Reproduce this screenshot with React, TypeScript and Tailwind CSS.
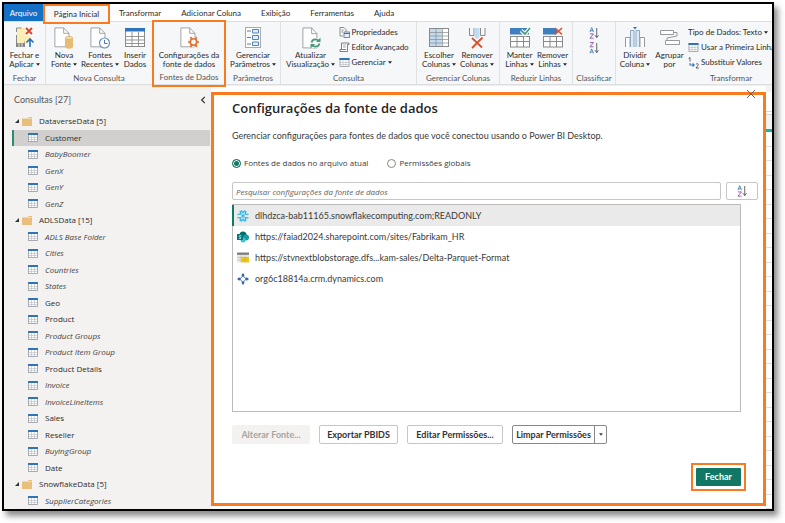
import React from "react";

type Query = { name: string; kind: "folder" | "table"; loaded?: boolean; selected?: boolean };

const queries: Query[] = [
  { name: "DataverseData [5]", kind: "folder" },
  { name: "Customer", kind: "table", loaded: true, selected: true },
  { name: "BabyBoomer", kind: "table" },
  { name: "GenX", kind: "table" },
  { name: "GenY", kind: "table" },
  { name: "GenZ", kind: "table" },
  { name: "ADLSData [15]", kind: "folder" },
  { name: "ADLS Base Folder", kind: "table" },
  { name: "Cities", kind: "table" },
  { name: "Countries", kind: "table" },
  { name: "States", kind: "table" },
  { name: "Geo", kind: "table", loaded: true },
  { name: "Product", kind: "table", loaded: true },
  { name: "Product Groups", kind: "table" },
  { name: "Product Item Group", kind: "table" },
  { name: "Product Details", kind: "table", loaded: true },
  { name: "Invoice", kind: "table" },
  { name: "InvoiceLineItems", kind: "table" },
  { name: "Sales", kind: "table", loaded: true },
  { name: "Reseller", kind: "table", loaded: true },
  { name: "BuyingGroup", kind: "table" },
  { name: "Date", kind: "table", loaded: true },
  { name: "SnowflakeData [5]", kind: "folder" },
  { name: "SupplierCategories", kind: "table" },
];

/* ---------- icons ---------- */

const TableIcon = ({ className = "h-[9px] w-[10px]" }: { className?: string }) => (
  <svg viewBox="0 0 20 18" className={`${className} shrink-0`} aria-hidden="true">
    <rect x="1" y="1" width="18" height="16" fill="#fff" stroke="#8a8f96" strokeWidth="1.5" />
    <path d="M1 9h18M1 13h18M7 4v13M13 4v13" stroke="#b4b9c0" strokeWidth="1.2" />
    <rect x="0" y="0" width="20" height="4" fill="#2f73b8" />
  </svg>
);

const FolderIcon = () => (
  <svg viewBox="0 0 20 18" className="h-[9px] w-[10px] shrink-0" aria-hidden="true">
    <path d="M0 3h11l2-3h7v18H0z" fill="#e9bf7c" />
    <path d="M12 3h7" stroke="#fbe9cb" strokeWidth="1.5" />
  </svg>
);

const Caret = () => (
  <svg viewBox="0 0 6 4" className="ml-[2px] inline-block h-[3px] w-[4px] align-middle" aria-hidden="true">
    <path d="M0 0h6L3 4z" fill="#222" />
  </svg>
);

const Page = () => (
  <>
    <path d="M1 1h10l6 6v15H1z" fill="#fff" stroke="#999" strokeWidth="1" />
    <path d="M11 1v6h6" fill="none" stroke="#999" strokeWidth="1" />
  </>
);

const big = "h-[22px] w-[24px] overflow-visible";

const CloseApplyIcon = () => (
  <svg viewBox="0 0 24 22" className={big} aria-hidden="true">
    <path d="M4 1h8v19H4z" fill="#fbeeb4" />
    <path d="M3.500 5V1h5M3.500 8v8M12 14v3" stroke="#8a8a8a" fill="none" />
    <path d="M12 9h6v4h-4v4h-2z" fill="#fbeeb4" />
    <path d="M3 16h9v4H3z" fill="#888" />
    <path d="M6 16v4M9 16v4" stroke="#ddd" />
    <path d="M13 1l6 6M19 1l-6 6" stroke="#d8432b" strokeWidth="1.8" />
    <path d="M17 20v-8M13.500 15.500L17 12l3.500 3.500" stroke="#2a6fb8" strokeWidth="1.6" fill="none" />
  </svg>
);
const NewSourceIcon = () => (
  <svg viewBox="0 0 24 22" className={big} aria-hidden="true">
    <g transform="translate(2 0) scale(.88 .9)"><Page /></g>
    <path d="M13 11v8.500c0 3 8 3 8 0V11z" fill="#e6bd72" />
    <ellipse cx="17" cy="11" rx="4" ry="1.600" fill="#f3d9a4" stroke="#d9a850" strokeWidth=".6" />
  </svg>
);
const RecentIcon = () => (
  <svg viewBox="0 0 24 22" className={big} aria-hidden="true">
    <g transform="translate(2 0) scale(.88 .9)"><Page /></g>
    <circle cx="16.500" cy="16" r="5" fill="#fff" stroke="#6c93bb" strokeWidth="1.200" />
    <path d="M16.500 13v3.500h3" stroke="#4779ac" fill="none" />
  </svg>
);
const InsertDataIcon = () => (
  <svg viewBox="0 0 24 22" className={big} aria-hidden="true">
    <rect x="2.500" y="1.500" width="19" height="18" fill="#fff" stroke="#8a8a8a" />
    <path d="M2 9.500h20M2 13h20M2 16.500h20M9 5v15M15.500 5v15" stroke="#8a8a8a" strokeWidth=".9" />
    <rect x="2" y="1" width="20" height="3.500" fill="#2f73b8" />
  </svg>
);
const SourceSettingsIcon = () => (
  <svg viewBox="0 0 24 22" className={big} aria-hidden="true">
    <g transform="translate(3 0) scale(.88 .9)"><Page /></g>
    <circle cx="16.500" cy="15" r="5" fill="#f5f7f9" />
    <circle cx="16.500" cy="15" r="3.200" fill="none" stroke="#e0702c" strokeWidth="1.600" />
    <path d="M11 15h2.500M19.500 15H22M13.500 10l1.200 2M18.500 18l1.200 2M19.700 10l-1.200 2M14.700 18l-1.200 2" stroke="#e0702c" strokeWidth="1.700" />
  </svg>
);
const ParametersIcon = () => (
  <svg viewBox="0 0 24 22" className={big} aria-hidden="true">
    <rect x="4.500" y=".5" width="15" height="20" fill="#fff" stroke="#aaa" />
    <path d="M6 4h4M6 10.500h4M6 17h4" stroke="#777" />
    <path d="M11.500 2.500h6v3.500h-6zM11.500 8.500h6v4h-6zM11.500 15h6v3.500h-6z" fill="#e5f0fa" stroke="#4e86bd" />
  </svg>
);
const RefreshIcon = () => (
  <svg viewBox="0 0 24 22" className={big} aria-hidden="true">
    <g transform="translate(3 0) scale(.88 .95)"><Page /></g>
    <rect x="11" y="11" width="11" height="10" fill="#f5f7f9" />
    <path d="M12.500 15.500c1-4 6-4 7.500-1M20.500 16.500c-1 4-6 4-7.500 1" stroke="#4a9a78" strokeWidth="1.700" fill="none" />
    <path d="M21.500 10.500v4.500h-4.500zM11.500 21.500V17H16z" fill="#4a9a78" />
  </svg>
);
const ChooseColumnsIcon = () => (
  <svg viewBox="0 0 24 22" className={big} aria-hidden="true">
    <rect x="2.500" y="1.500" width="19" height="18" fill="#fff" stroke="#8a8a8a" />
    <rect x="3" y="2" width="12" height="17" fill="#c3dbf1" />
    <path d="M2 5.500h20M2 9h20M2 12.500h20M2 16h20M9 2v18M15.500 2v18" stroke="#8a8a8a" strokeWidth=".7" />
  </svg>
);
const RemoveColumnsIcon = () => (
  <svg viewBox="0 0 24 22" className={big} aria-hidden="true">
    <path d="M4.500 1v7.500h4.500V1M15.500 1v7.500H20V1" fill="none" stroke="#8a8a8a" />
    <path d="M9.500 1h5v9l-2.500 2-2.500-2z" fill="#c3dbf1" />
    <path d="M7 11l10 9.500M17.500 10.500L7 21" stroke="#d8532f" strokeWidth="1.800" />
  </svg>
);
const RowsIcon = ({ remove = false }: { remove?: boolean }) => (
  <svg viewBox="0 0 24 22" className={big} aria-hidden="true">
    {remove ? <path d="M2 1h12l3 3-3 3.500H2z" fill="#3f7fc0" /> : <rect x="2" y="1" width="19" height="6.500" fill="#3f7fc0" />}
    <rect x="2.500" y="9.500" width="19" height="10.500" fill="#fff" stroke="#8a8a8a" />
    <path d="M2 14.500h20M9 9v11M15.500 9v11" stroke="#8a8a8a" />
    {remove ? (
      <path d="M14 1l7 6.500M21 1l-7 6.500" stroke="#d8532f" strokeWidth="1.600" />
    ) : (
      <>
        <path d="M13 3.500l4 3.500L22 1" stroke="#fff" strokeWidth="4" fill="none" />
        <path d="M13 3.500l4 3.500L22 1" stroke="#4a9a78" strokeWidth="1.700" fill="none" />
      </>
    )}
  </svg>
);
const SplitColumnIcon = () => (
  <svg viewBox="0 0 24 22" className={big} aria-hidden="true">
    <path d="M2.500 20V10.500H7V20M17 20V10.500h4.500V20" fill="#fff" stroke="#999" />
    <path d="M7.500 20V3.500H11V20M13 20V3.500h3.500V20" fill="#dceaf7" stroke="#8ba6c2" />
    <path d="M10 0h4l-2 2.500z" fill="#2f73b8" />
  </svg>
);
const GroupByIcon = () => (
  <svg viewBox="0 0 24 22" className={big} aria-hidden="true">
    <path d="M2.500 3.500h13v4h-13zM7.500 13.500h14v4h-14z" fill="#fff" stroke="#999" />
    <path d="M15.500 5.500H19v3.500L9 11v2.500" fill="none" stroke="#999" />
  </svg>
);
const SortIcon = ({ desc = false }: { desc?: boolean }) => (
  <svg viewBox="0 0 11 13" className="h-[12px] w-[10px] overflow-visible" aria-hidden="true">
    <g transform={desc ? "translate(0 7)" : undefined}>
      <path d="M1 5.500L3 .5l2 5M1.700 4h2.600" fill="none" stroke="#3c78b5" strokeWidth=".9" />
    </g>
    <g transform={desc ? "translate(0 -7)" : undefined}>
      <path d="M1 7.500h4L1 12.200h4" fill="none" stroke="#8a3fa8" strokeWidth=".9" />
    </g>
    <path d="M8.500 1v10.500M6.500 9l2 2.500 2-2.500" fill="none" stroke="#555" strokeWidth="1" />
  </svg>
);
const PropertiesIcon = () => (
  <svg viewBox="0 0 11 11" className="h-[11px] w-[11px]" aria-hidden="true">
    <path d="M1 .5h4l2 2V5M1 .5V9h3M2.500 3h2M2.500 5H4" fill="none" stroke="#858585" strokeWidth=".9" />
    <rect x="5" y="5" width="5.500" height="5.500" fill="#e4eef7" stroke="#69809a" strokeWidth=".9" />
    <path d="M5 6.500h6" stroke="#2f73b8" />
  </svg>
);
const EditorIcon = () => (
  <svg viewBox="0 0 11 11" className="h-[11px] w-[11px]" aria-hidden="true">
    <path d="M2.500 7V1h7.500v1.500H8.500V9.500H1V7.500h6" fill="#fff" stroke="#707070" strokeWidth=".9" />
    <path d="M4 3h3M4 5h3" stroke="#888" strokeWidth=".7" />
  </svg>
);
const ReplaceIcon = () => (
  <svg viewBox="0 0 11 11" className="h-[11px] w-[11px] overflow-visible" aria-hidden="true">
    <path d="M.5 1.500L2 .5V4.500M8 7.200c2-1.400 3 .3 1.700 1.500L8 11h3" fill="none" stroke="#555" strokeWidth=".9" />
    <path d="M2 6v2h4M4.500 6.300L6.300 8 4.500 9.700" fill="none" stroke="#3c78b5" strokeWidth="1.100" />
  </svg>
);

/* ---------- ribbon ---------- */

function BigButton({ icon, lines, caret, className = "" }: { icon: React.ReactNode; lines: [string, string]; caret?: boolean; className?: string }) {
  return (
    <button type="button" className={`flex shrink-0 flex-col items-center gap-[2px] pt-[2px] text-center whitespace-nowrap ${className}`}>
      {icon}
      <span>
        {lines[0]}
        <br />
        {lines[1]}
        {caret && <Caret />}
      </span>
    </button>
  );
}

function SmallButton({ icon, label, caret }: { icon?: React.ReactNode; label: string; caret?: boolean }) {
  return (
    <button type="button" className="flex h-[15px] items-center gap-[2px] whitespace-nowrap">
      {icon}
      <span>
        {label}
        {caret && <Caret />}
      </span>
    </button>
  );
}

function Group({ label, className, children }: { label: string; className: string; children: React.ReactNode }) {
  return (
    <section aria-label={label} className={`flex flex-col justify-between ${className}`}>
      <div className="flex justify-center pt-[3px]">{children}</div>
      <div className="pb-[1px] text-center whitespace-nowrap text-[#555]">{label}</div>
    </section>
  );
}

const sep = "border-r border-[#dfe1e3]";

function Ribbon() {
  return (
    <div className="flex h-[64px] shrink-0 border-y border-[#dcdee0] bg-[#f5f7f9] text-[8px] leading-[9px] text-[#2b2b2b]">
      <Group label="Fechar" className={`w-[42px] shrink-0 ${sep}`}>
        <BigButton icon={<CloseApplyIcon />} lines={["Fechar e", "Aplicar"]} caret />
      </Group>
      <Group label="Nova Consulta" className="w-[106px] shrink-0">
        <BigButton className="w-[32px]" icon={<NewSourceIcon />} lines={["Nova", "Fonte"]} caret />
        <BigButton className="w-[40px]" icon={<RecentIcon />} lines={["Fontes", "Recentes"]} caret />
        <BigButton className="w-[30px]" icon={<InsertDataIcon />} lines={["Inserir", "Dados"]} />
      </Group>
      <Group label="Fontes de Dados" className="z-10 -mt-[2px] -mb-[3px] w-[74px] shrink-0 border-[2px] border-[#f97a1f] pb-[2px]">
        <BigButton icon={<SourceSettingsIcon />} lines={["Configurações da", "fonte de dados"]} />
      </Group>
      <Group label="Parâmetros" className={`w-[55px] shrink-0 ${sep}`}>
        <BigButton icon={<ParametersIcon />} lines={["Gerenciar", "Parâmetros"]} caret />
      </Group>
      <Group label="Consulta" className={`w-[136px] shrink-0 ${sep}`}>
        <BigButton className="w-[56px]" icon={<RefreshIcon />} lines={["Atualizar", "Visualização"]} caret />
        <div className="flex w-[76px] flex-col">
          <SmallButton icon={<PropertiesIcon />} label="Propriedades" />
          <SmallButton icon={<EditorIcon />} label="Editor Avançado" />
          <SmallButton icon={<TableIcon className="h-[9px] w-[11px]" />} label="Gerenciar" caret />
        </div>
      </Group>
      <Group label="Gerenciar Colunas" className={`w-[83px] shrink-0 ${sep}`}>
        <BigButton className="w-[38px]" icon={<ChooseColumnsIcon />} lines={["Escolher", "Colunas"]} caret />
        <BigButton className="w-[38px]" icon={<RemoveColumnsIcon />} lines={["Remover", "Colunas"]} caret />
      </Group>
      <Group label="Reduzir Linhas" className={`w-[73px] shrink-0 ${sep}`}>
        <BigButton className="w-[33px]" icon={<RowsIcon />} lines={["Manter", "Linhas"]} caret />
        <BigButton className="w-[33px]" icon={<RowsIcon remove />} lines={["Remover", "Linhas"]} caret />
      </Group>
      <Group label="Classificar" className={`w-[43px] shrink-0 ${sep}`}>
        <div className="flex flex-col gap-[3px] pt-[2px]">
          <button type="button" aria-label="Classificar em ordem crescente"><SortIcon /></button>
          <button type="button" aria-label="Classificar em ordem decrescente"><SortIcon desc /></button>
        </div>
      </Group>
      <div className="min-w-0 flex-1 overflow-hidden">
        <Group label="Transformar" className="h-full w-[230px]">
          <div className="flex w-full">
            <BigButton className="w-[38px]" icon={<SplitColumnIcon />} lines={["Dividir", "Coluna"]} caret />
            <BigButton className="w-[31px]" icon={<GroupByIcon />} lines={["Agrupar", "por"]} />
            <div className="flex flex-col pl-[3px]">
              <SmallButton label="Tipo de Dados: Texto" caret />
              <SmallButton icon={<TableIcon className="h-[9px] w-[11px]" />} label="Usar a Primeira Linha" />
              <SmallButton icon={<ReplaceIcon />} label="Substituir Valores" />
            </div>
          </div>
        </Group>
      </div>
    </div>
  );
}

function Tabs() {
  return (
    <nav className="flex h-[17px] shrink-0 items-center bg-white text-[8px] leading-[10px] whitespace-nowrap text-[#2b2b2b]">
      <button type="button" className="h-full w-[39px] bg-[#1470c6] text-white">Arquivo</button>
      <button type="button" className="z-10 h-[20px] w-[67px] self-start border-[2px] border-[#f97a1f] bg-[#f5f7f9]">Página Inicial</button>
      <div className="flex gap-[20px] pl-[9px]">
        <button type="button">Transformar</button>
        <button type="button">Adicionar Coluna</button>
        <button type="button">Exibição</button>
        <button type="button">Ferramentas</button>
        <button type="button">Ajuda</button>
      </div>
    </nav>
  );
}

/* ---------- queries pane ---------- */

function QueriesPane() {
  return (
    <aside className="flex w-[207px] shrink-0 flex-col bg-[#f3f2f1]">
      <div className="flex h-[27px] items-center justify-between pr-[5px] pl-[10px] text-[9px] text-[#555]">
        <h2>Consultas [27]</h2>
        <button type="button" aria-label="Recolher painel">
          <svg viewBox="0 0 6 9" className="h-[8px] w-[6px]" aria-hidden="true">
            <path d="M5 1L1.500 4.500 5 8" fill="none" stroke="#333" strokeWidth="1.400" />
          </svg>
        </button>
      </div>
      <ul className="flex min-h-0 flex-1 flex-col font-['Open_Sans','Noto_Sans',sans-serif] text-[8px] leading-[10px]">
        {queries.map((q) =>
          q.kind === "folder" ? (
            <li key={q.name} className="flex flex-1 items-center pl-[11px] text-[#2b2b2b]">
              <svg viewBox="0 0 5 5" className="mr-[3px] h-[4px] w-[4px]" aria-hidden="true">
                <path d="M5 0v5H0z" fill="#333" />
              </svg>
              <FolderIcon />
              <span className="pl-[7px]">{q.name}</span>
            </li>
          ) : (
            <li
              key={q.name}
              className={`mr-[1px] ml-[8px] flex flex-1 items-center border-l-2 pl-[14px] ${q.selected ? "border-[#2d8a75] bg-[#d2d0ce]" : "border-transparent"} ${q.loaded ? "text-[#2b2b2b]" : "text-[#444] italic"}`}
            >
              <TableIcon />
              <span className="pl-[7px]">{q.name}</span>
            </li>
          ),
        )}
      </ul>
    </aside>
  );
}

/* ---------- dialog ---------- */

const SnowflakeIcon = () => (
  <svg viewBox="0 0 22 22" className="h-[12px] w-[12px]" aria-hidden="true">
    <g stroke="#29b5e8" strokeWidth="2.400" fill="none">
      <path d="M7 1l4 4 4-4M7 21l4-4 4 4M1 8l6-.5L5.500 2M21 8l-6-.5L16.500 2M1 14l6 .5L5.500 20M21 14l-6 .5 1.500 5.500M11 9l2 2-2 2-2-2z" />
    </g>
  </svg>
);
const SharePointIcon = () => (
  <svg viewBox="0 0 24 22" className="h-[12px] w-[12px]" aria-hidden="true">
    <circle cx="12" cy="7" r="7" fill="#036c70" />
    <circle cx="18" cy="12" r="6" fill="#1a9ba1" />
    <circle cx="12" cy="17" r="5" fill="#37c6d0" />
    <rect x="0" y="5" width="12" height="12" fill="#03787c" />
    <path d="M8.500 8.500C5 7 3 10 6 11s2.500 4-2 2.500" stroke="#fff" strokeWidth="1.600" fill="none" />
  </svg>
);
const StorageIcon = () => (
  <svg viewBox="0 0 22 20" className="h-[11px] w-[12px]" aria-hidden="true">
    <rect x="0" y="1" width="22" height="18" fill="#e8e8e8" />
    <rect x="0" y="1" width="22" height="4" fill="#7a7a7a" />
    <path d="M8 9h14v10H8z" fill="#f2c811" />
    <path d="M1 10h20M1 14.500h20M7.500 6v13M14.500 6v13" stroke="#c5ab5a" strokeWidth="1" />
  </svg>
);
const DataverseIcon = () => (
  <svg viewBox="0 0 22 22" className="h-[12px] w-[12px]" aria-hidden="true">
    <path d="M11 5l6 6-6 6-6-6z" fill="#fff" stroke="#3566a8" strokeWidth="1.800" />
    <path d="M11 0l3 4-3 3-3-3zM11 22l3-4-3-3-3 3zM0 11l4-3 3 3-3 3zM22 11l-4-3-3 3 3 3z" fill="#3566a8" />
  </svg>
);

const sources = [
  { icon: <SnowflakeIcon />, name: "dlhdzca-bab11165.snowflakecomputing.com;READONLY" },
  { icon: <SharePointIcon />, name: "https://faiad2024.sharepoint.com/sites/Fabrikam_HR" },
  { icon: <StorageIcon />, name: "https://stvnextblobstorage.dfs...kam-sales/Delta-Parquet-Format" },
  { icon: <DataverseIcon />, name: "org6c18814a.crm.dynamics.com" },
];

const radio =
  "m-0 h-[9px] w-[9px] appearance-none rounded-full border border-[#8a8886] bg-white checked:border-[#117865] checked:bg-[#117865] checked:shadow-[inset_0_0_0_1px_#fff]";
const action = "h-[19px] rounded-[2px] border border-[#c8c6c4] bg-white";

function Dialog() {
  return (
    <section
      role="dialog"
      aria-labelledby="dialog-title"
      className="relative mt-[6px] mb-[3px] flex min-w-0 flex-1 flex-col border-[3px] border-[#f97a1f] bg-white pl-[18px] text-[9px] leading-[12px] text-[#3a3a3a]"
    >
      <button type="button" aria-label="Fechar janela" className="absolute -top-[5px] right-[8px]">
        <svg viewBox="0 0 8 8" className="h-[8px] w-[8px]" aria-hidden="true">
          <path d="M0 0l8 8M8 0L0 8" stroke="#666" strokeWidth="1" />
        </svg>
      </button>
      <h1 id="dialog-title" className="pt-[4px] font-['Open_Sans','Noto_Sans',sans-serif] text-[13px] leading-[18px] font-semibold text-[#252423]">
        Configurações da fonte de dados
      </h1>
      <p className="pt-[13px]">Gerenciar configurações para fontes de dados que você conectou usando o Power BI Desktop.</p>
      <div className="flex gap-[19px] pt-[15px] font-['Open_Sans','Noto_Sans',sans-serif] text-[8px]">
        <label className="flex items-center gap-[3px]">
          <input type="radio" name="scope" defaultChecked className={radio} />
          Fontes de dados no arquivo atual
        </label>
        <label className="flex items-center gap-[3px]">
          <input type="radio" name="scope" className={radio} />
          Permissões globais
        </label>
      </div>
      <div className="flex gap-[5px] pt-[13px] pr-[5px]">
        <input
          type="text"
          aria-label="Pesquisar configurações da fonte de dados"
          placeholder="Pesquisar configurações da fonte de dados"
          className="h-[18px] min-w-0 flex-1 rounded-[2px] border border-[#c8c6c4] px-[3px] font-['Open_Sans','Noto_Sans',sans-serif] text-[8px] placeholder:text-[#605e5c] placeholder:italic"
        />
        <button type="button" aria-label="Classificar" className="flex h-[18px] w-[32px] items-center justify-center rounded-[2px] border border-[#c8c6c4]">
          <SortIcon />
        </button>
      </div>
      <ul className="mt-[4px] mr-[22px] min-h-0 flex-1 border border-[#bdbbb9]">
        {sources.map((s, i) => (
          <li key={s.name} className={`-ml-px flex h-[21px] items-center gap-[6px] border-l-2 pl-[3px] ${i === 0 ? "border-[#117865] bg-[#eaeaea]" : "border-transparent"}`}>
            {s.icon}
            {s.name}
          </li>
        ))}
      </ul>
      <div className="flex gap-[9px] pt-[13px] font-bold text-[#333]">
        <button type="button" disabled className="h-[19px] w-[78px] rounded-[2px] bg-[#f3f2f1] text-[#a6a4a2]">Alterar Fonte...</button>
        <button type="button" className={`w-[79px] ${action}`}>Exportar PBIDS</button>
        <button type="button" className={`w-[96px] ${action}`}>Editar Permissões...</button>
        <div className="flex h-[19px] rounded-[2px] border border-[#8a8886]">
          <button type="button" className="w-[82px] border-r border-[#8a8886] whitespace-nowrap">Limpar Permissões</button>
          <button type="button" aria-label="Mais opções" className="flex w-[11px] items-center justify-center">
            <svg viewBox="0 0 6 4" className="h-[3px] w-[4px]" aria-hidden="true"><path d="M0 0h6L3 4z" fill="#444" /></svg>
          </button>
        </div>
      </div>
      <div className="flex justify-end pt-[19px] pr-[17px] pb-[12px]">
        <div className="border-[2px] border-[#f97a1f] p-[3px]">
          <button type="button" className="block h-[18px] w-[45px] rounded-[1px] bg-[#117865] font-bold text-white">Fechar</button>
        </div>
      </div>
    </section>
  );
}

/* The sliver of the data grid that stays visible beside the dialog. */
function GridEdge() {
  return (
    <div className="flex w-[6px] shrink-0 flex-col bg-white" aria-hidden="true">
      <div className="h-[6px] bg-[#f3f2f1]" />
      <div className="h-[20px] border-b border-[#d5d5d5]" />
      <div className="mt-[2px] h-[15px] border-t border-[#d5d5d5] bg-[#f3f2f1]" />
      <div className="h-[3px] bg-[#11b5a5]" />
      {Array.from({ length: 26 }, (_, i) => (
        <div key={i} className="min-h-0 flex-1 border-b border-[#dcdcdc]" />
      ))}
    </div>
  );
}

export default function App() {
  return (
    <div className="h-screen overflow-hidden bg-white pt-[2px] pr-[11px] pb-[12px] pl-[2px] font-['Lato','Open_Sans',sans-serif]">
      <div className="flex h-full flex-col overflow-hidden border-2 border-black bg-white shadow-[4px_5px_6px_rgba(0,0,0,0.45)]">
        <Tabs />
        <Ribbon />
        <main className="flex min-h-0 flex-1 border-t border-[#eeeeee]">
          <QueriesPane />
          <Dialog />
          <GridEdge />
        </main>
      </div>
    </div>
  );
}
